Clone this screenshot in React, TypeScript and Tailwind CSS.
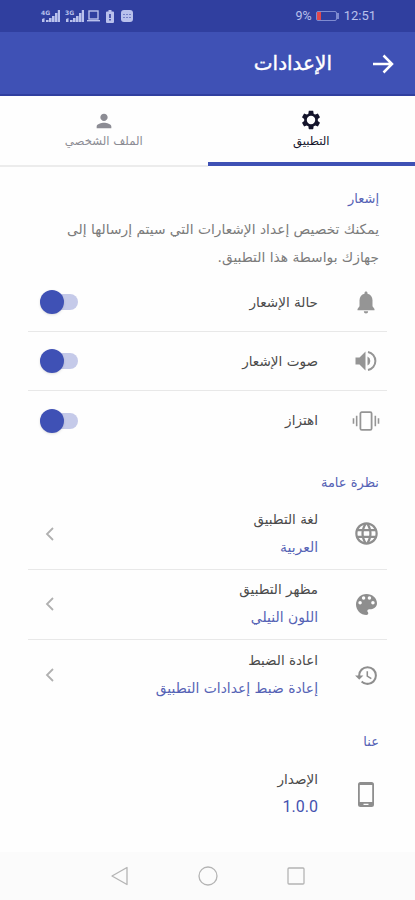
import React, { useState } from 'react';
import { MdPerson, MdLanguage, MdHistory } from 'react-icons/md';

interface ToggleRowProps {
  icon: React.ReactNode;
  label: string;
  last?: boolean;
}

interface LinkRowProps {
  icon: React.ReactNode;
  title: string;
  value: string;
  last?: boolean;
}

const GearIcon = () => (
  <svg viewBox="0 0 24 24" className="w-[22px] h-[22px]" fill="currentColor">
    <path
      fillRule="evenodd"
      d="M19.43 12.98c.04-.32.07-.64.07-.98s-.03-.66-.07-.98l2.11-1.650c.19-.15.24-.42.12-.64l-2-3.460c-.12-.22-.39-.3-.61-.22l-2.490 1c-.52-.4-1.080-.73-1.690-.98l-.38-2.650C14.460 2.180 14.250 2 14 2h-4c-.25 0-.46.18-.49.42l-.38 2.650c-.61.25-1.170.59-1.690.98l-2.490-1c-.23-.09-.49 0-.61.22l-2 3.460c-.13.22-.07.49.12.64l2.110 1.650c-.04.32-.07.65-.07.98s.03.66.07.98l-2.110 1.650c-.19.15-.24.42-.12.64l2 3.460c.12.22.39.3.61.22l2.490-1c.52.4 1.080.73 1.690.98l.38 2.650c.03.24.24.42.49.42h4c.25 0 .46-.18.49-.42l.38-2.650c.61-.25 1.170-.59 1.690-.98l2.490 1c.23.09.49 0 .61-.22l2-3.460c.12-.22.07-.49-.12-.64zM12 16.600a4.600 4.600 0 1 1 0-9.200 4.600 4.600 0 0 1 0 9.200z"
    />
  </svg>
);

const BellIcon = () => (
  <svg viewBox="0 0 18 23" className="w-[18px] h-[23px]" fill="currentColor">
    <path d="M9 .5c-.9 0-1.500.7-1.500 1.600v.6C4.500 3.400 2.500 6 2.500 9.200v6L.5 18v1.300h17V18l-2-2.800v-6c0-3.200-2-5.800-5-6.500v-.6C10.500 1.200 9.900.5 9 .5zM6.800 20.300a2.200 2.200 0 0 0 4.400 0z" />
  </svg>
);

const VolumeIcon = () => (
  <svg viewBox="0 0 22 22" className="w-[22px] h-[22px]">
    <path d="M.5 7.500h4L10.500 1.500v19l-6-6h-4z" fill="currentColor" />
    <path d="M12.500 6.500a5 5 0 0 1 0 9z" fill="currentColor" />
    <path d="M13 1.900a9.300 9.300 0 0 1 0 18.200" fill="none" stroke="currentColor" strokeWidth="2" />
  </svg>
);

const VibrationIcon = () => (
  <svg viewBox="0 0 30 22" className="w-[30px] h-[22px]" fill="none" stroke="currentColor">
    <rect x="9" y="1.500" width="12" height="19" rx="1.500" strokeWidth="1.900" />
    <path d="M5 5.500v11M25 5.500v11M1.600 8v6M28.400 8v6" strokeWidth="1.700" />
  </svg>
);

const PaletteIcon = () => (
  <svg viewBox="3 3 18 18" className="w-[21px] h-[21px]" fill="currentColor">
    <path
      fillRule="evenodd"
      d="M12 3c-4.970 0-9 4.030-9 9s4.030 9 9 9c.83 0 1.500-.67 1.500-1.500 0-.39-.15-.74-.39-1.010-.23-.26-.38-.61-.38-.99 0-.83.67-1.500 1.500-1.500H16c2.760 0 5-2.240 5-5 0-4.420-4.030-8-9-8zM6.500 12a1.500 1.500 0 1 1 0-3 1.500 1.500 0 0 1 0 3zM9.500 8a1.500 1.500 0 1 1 0-3 1.500 1.500 0 0 1 0 3zM14.500 8a1.500 1.500 0 1 1 0-3 1.500 1.500 0 0 1 0 3zM17.500 12a1.500 1.500 0 1 1 0-3 1.500 1.500 0 0 1 0 3z"
    />
  </svg>
);

const PhoneIcon = () => (
  <svg viewBox="0 0 16 25" className="w-4 h-[25px]" fill="currentColor">
    <path
      fillRule="evenodd"
      d="M2.500 0h11A2.500 2.500 0 0 1 16 2.500v20a2.500 2.500 0 0 1-2.500 2.500h-11A2.500 2.500 0 0 1 0 22.500v-20A2.500 2.500 0 0 1 2.500 0zM1.800 3v17h12.400V3zM5.500 21.800v1.200h5v-1.200z"
    />
  </svg>
);

const Signal: React.FC<{ label: string }> = ({ label }) => (
  <div className="relative w-[19px] h-[13px]">
    <span className="absolute left-0 -top-px text-[6px] leading-[7px] font-bold">{label}</span>
    <svg viewBox="0 0 19 13" className="w-full h-full" fill="currentColor">
      <path d="M1 9l2.500-1v4H1zM5 10h2.600v2H5zM8 8h2.600v4H8zM11 6h2.600v6H11zM14 3h2.400v9H14zM16.800 0H19v12h-2.200z" />
    </svg>
  </div>
);

const StatusBar = () => (
  <div dir="ltr" className="h-8 shrink-0 bg-[#303f9f] text-[#b9c1ec] flex items-center justify-between pl-[41px] pr-[39px]">
    <div className="flex items-center">
      <Signal label="4G" />
      <div className="w-[5px]" />
      <Signal label="3G" />
      <svg viewBox="0 0 13 12" className="w-[13px] h-3 ml-[3px]" fill="none" stroke="currentColor" strokeWidth="1.4">
        <rect x="2" y="1" width="9" height="8" />
        <path d="M0 10.7h13" />
      </svg>
      <svg viewBox="0 0 8 13" className="w-2 h-[13px] ml-1.5" fill="currentColor">
        <path fillRule="evenodd" d="M2.500 0h3v1.500H7q1 0 1 1V12q0 1-1 1H1q-1 0-1-1V2.500q0-1 1-1h1.500zM3.200 4v4h1.600V4zM3.200 9v1.600h1.600V9z" />
      </svg>
      <svg viewBox="0 0 12 12" className="w-3 h-3 ml-[7px]">
        <rect width="12" height="12" rx="3" fill="currentColor" />
        <path d="M2 4.500h8M2 7.500h8" stroke="#7480c6" strokeWidth="1" strokeDasharray="2 1" />
      </svg>
    </div>
    <div className="flex items-center font-[Roboto,sans-serif] text-[13px]">
      <span className="text-[12.5px]">9%</span>
      <svg viewBox="0 0 24 10" className="w-6 h-2.5 ml-1 mr-1" fill="none">
        <rect x=".5" y=".5" width="20" height="9" rx="1.500" stroke="#7f8bd0" />
        <rect x="1" y="1" width="4" height="8" fill="#e0484d" />
        <rect x="21" y="2" width="2" height="6" fill="#7f8bd0" />
      </svg>
      <span>12:51</span>
    </div>
  </div>
);

const ToggleRow: React.FC<ToggleRowProps> = ({ icon, label, last }) => {
  const [on, setOn] = useState(true);

  return (
    <div className={`h-[59px] mx-7 pr-[7px] pl-3 flex items-center ${last ? '' : 'border-b border-[#e8e8e8]'}`}>
      <div className="w-7 flex justify-center text-[#959595]">{icon}</div>
      <span className="mr-[34px] text-[13.6px] text-[#4a4a4a]">{label}</span>
      <button onClick={() => setOn(!on)} className="mr-auto w-[38px] h-6 flex items-center">
        <span className="relative w-[38px] h-4 flex items-center">
          <span className="w-full h-4 rounded-full bg-[#c5cae9]" />
          <span
            className={`absolute w-6 h-6 rounded-full shadow-sm ${on ? 'left-0 bg-[#3f51b5]' : 'right-0 bg-gray-100'}`}
          />
        </span>
      </button>
    </div>
  );
};

const LinkRow: React.FC<LinkRowProps> = ({ icon, title, value, last }) => (
  <div className={`mx-7 pr-[7px] pl-4 flex items-center ${last ? 'h-[70px]' : 'h-[70.500px] border-b border-[#e8e8e8]'}`}>
    <div className="w-7 flex justify-center text-[#8e8e8e]">{icon}</div>
    <div className="mr-[34px] pb-0.5 flex flex-col">
      <span className="text-[13.5px] leading-7 text-[#4a4a4a]">{title}</span>
      <span className="text-[13.9px] leading-7 text-[#5562b5]">{value}</span>
    </div>
    <svg viewBox="0 0 12 14" className="mr-auto w-3 h-3.5" fill="none" stroke="#b0b0b0" strokeWidth="1.800">
      <path d="M9 1L3 7l6 6" />
    </svg>
  </div>
);

const App = () => {
  return (
    <div dir="rtl" className="w-full h-[900px] bg-[#fefefe] flex flex-col overflow-hidden font-['DejaVu_Sans',sans-serif]">
      <StatusBar />
      <header className="h-16 shrink-0 bg-[#3f51b5] border-b-2 border-[#303f9f] flex items-center pr-5 text-white">
        <svg viewBox="0 0 24 24" className="w-6 h-6" fill="none" stroke="currentColor" strokeWidth="2.500">
          <path d="M2 13h18M12.500 4.500L21 13l-8.500 8.500" />
        </svg>
        <h1 className="mr-[39px] text-[20px] [-webkit-text-stroke:0.4px]">الإعدادات</h1>
      </header>

      <nav className="h-[71px] shrink-0 grid grid-cols-2 text-[11.7px]">
        <button className="mb-px flex flex-col items-center pt-[13px] border-b-4 border-[#3f51b5] text-[#14142b]">
          <GearIcon />
          <span className="mt-0.5">التطبيق</span>
        </button>
        <button className="flex flex-col items-center pt-3.5 border-b-2 border-[#ececec] text-[#8c8c94]">
          <MdPerson className="w-[22px] h-[22px]" />
          <span className="mt-px">الملف الشخصي</span>
        </button>
      </nav>

      <main className="flex-1">
        <section className="h-[106px] pt-[18px] px-9">
          <h2 className="text-[13px] leading-7 text-[#5562b5]">إشعار</h2>
          <p className="pt-0.5 text-[13.8px] leading-7 text-[#7b7b7b] whitespace-nowrap">
            يمكنك تخصيص إعداد الإشعارات التي سيتم إرسالها إلى
            <br />
            جهازك بواسطة هذا التطبيق.
          </p>
        </section>
        <ToggleRow icon={<BellIcon />} label="حالة الإشعار" />
        <ToggleRow icon={<VolumeIcon />} label="صوت الإشعار" />
        <ToggleRow icon={<VibrationIcon />} label="اهتزاز" last />

        <h2 className="h-[49px] pt-[19px] pr-9 text-[13px] leading-7 text-[#5562b5]">نظرة عامة</h2>
        <LinkRow icon={<MdLanguage className="w-[27px] h-[27px]" />} title="لغة التطبيق" value="العربية" />
        <LinkRow icon={<PaletteIcon />} title="مظهر التطبيق" value="اللون النيلي" />
        <LinkRow icon={<MdHistory className="w-[25px] h-[25px]" />} title="اعادة الضبط" value="إعادة ضبط إعدادات التطبيق" last />

        <h2 className="h-[49px] pt-[18px] pr-9 text-[13px] leading-7 text-[#5562b5]">عنا</h2>
        <div className="h-[70px] mx-7 pr-[7px] flex items-center">
          <div className="w-7 flex justify-center text-[#8e8e8e]">
            <PhoneIcon />
          </div>
          <div className="mr-[34px] pb-0.5 flex flex-col">
            <span className="text-[13.6px] leading-7 text-[#4a4a4a]">الإصدار</span>
            <span className="text-[16px] leading-7 text-[#4451ae] font-[Roboto,sans-serif]">1.0.0</span>
          </div>
        </div>
      </main>

      <footer dir="ltr" className="h-12 shrink-0 bg-[#fbfbfb] flex items-center justify-center gap-[68px] text-[#b4b4b4]">
        <svg viewBox="0 0 20 20" className="w-5 h-5" fill="none" stroke="currentColor" strokeWidth="1.300">
          <path d="M17 1.500v17L2 10z" strokeLinejoin="round" />
        </svg>
        <svg viewBox="0 0 20 20" className="w-5 h-5" fill="none" stroke="currentColor" strokeWidth="1.300">
          <circle cx="10" cy="10" r="9" />
        </svg>
        <svg viewBox="0 0 20 20" className="w-5 h-5" fill="none" stroke="currentColor" strokeWidth="1.300">
          <rect x="2" y="2" width="16" height="16" rx="1" />
        </svg>
      </footer>
    </div>
  );
};

export default App;
